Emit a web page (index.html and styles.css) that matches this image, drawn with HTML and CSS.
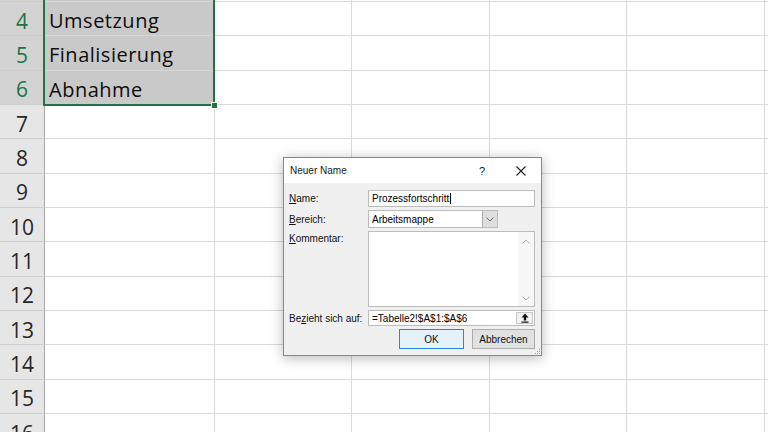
FILE: index.html
```html
<!DOCTYPE html>
<html lang="de">

<head>
    <meta charset="UTF-8">
    <meta name="viewport" content="width=device-width, initial-scale=1.0">
    <title>Neuer Name</title>
    <link rel="stylesheet" href="styles.css">
</head>

<body>
    <div class="sheet">
        <div class="row">
            <div class="hdr hdr-sel"></div>
            <div class="cell col-a sel"></div>
            <div class="cell col-b"></div><div class="cell col-c"></div><div class="cell col-b"></div><div class="cell col-c"></div><div class="cell col-f"></div>
        </div>
        <div class="row">
            <div class="hdr hdr-sel">4</div>
            <div class="cell col-a sel">Umsetzung</div>
            <div class="cell col-b"></div><div class="cell col-c"></div><div class="cell col-b"></div><div class="cell col-c"></div><div class="cell col-f"></div>
        </div>
        <div class="row">
            <div class="hdr hdr-sel">5</div>
            <div class="cell col-a sel">Finalisierung</div>
            <div class="cell col-b"></div><div class="cell col-c"></div><div class="cell col-b"></div><div class="cell col-c"></div><div class="cell col-f"></div>
        </div>
        <div class="row">
            <div class="hdr hdr-sel">6</div>
            <div class="cell col-a sel">Abnahme</div>
            <div class="cell col-b"></div><div class="cell col-c"></div><div class="cell col-b"></div><div class="cell col-c"></div><div class="cell col-f"></div>
        </div>
        <div class="row">
            <div class="hdr">7</div>
            <div class="cell col-a"></div>
            <div class="cell col-b"></div><div class="cell col-c"></div><div class="cell col-b"></div><div class="cell col-c"></div><div class="cell col-f"></div>
        </div>
        <div class="row">
            <div class="hdr">8</div>
            <div class="cell col-a"></div>
            <div class="cell col-b"></div><div class="cell col-c"></div><div class="cell col-b"></div><div class="cell col-c"></div><div class="cell col-f"></div>
        </div>
        <div class="row">
            <div class="hdr">9</div>
            <div class="cell col-a"></div>
            <div class="cell col-b"></div><div class="cell col-c"></div><div class="cell col-b"></div><div class="cell col-c"></div><div class="cell col-f"></div>
        </div>
        <div class="row">
            <div class="hdr">10</div>
            <div class="cell col-a"></div>
            <div class="cell col-b"></div><div class="cell col-c"></div><div class="cell col-b"></div><div class="cell col-c"></div><div class="cell col-f"></div>
        </div>
        <div class="row">
            <div class="hdr">11</div>
            <div class="cell col-a"></div>
            <div class="cell col-b"></div><div class="cell col-c"></div><div class="cell col-b"></div><div class="cell col-c"></div><div class="cell col-f"></div>
        </div>
        <div class="row">
            <div class="hdr">12</div>
            <div class="cell col-a"></div>
            <div class="cell col-b"></div><div class="cell col-c"></div><div class="cell col-b"></div><div class="cell col-c"></div><div class="cell col-f"></div>
        </div>
        <div class="row">
            <div class="hdr">13</div>
            <div class="cell col-a"></div>
            <div class="cell col-b"></div><div class="cell col-c"></div><div class="cell col-b"></div><div class="cell col-c"></div><div class="cell col-f"></div>
        </div>
        <div class="row">
            <div class="hdr">14</div>
            <div class="cell col-a"></div>
            <div class="cell col-b"></div><div class="cell col-c"></div><div class="cell col-b"></div><div class="cell col-c"></div><div class="cell col-f"></div>
        </div>
        <div class="row">
            <div class="hdr">15</div>
            <div class="cell col-a"></div>
            <div class="cell col-b"></div><div class="cell col-c"></div><div class="cell col-b"></div><div class="cell col-c"></div><div class="cell col-f"></div>
        </div>
        <div class="row">
            <div class="hdr">16</div>
            <div class="cell col-a"></div>
            <div class="cell col-b"></div><div class="cell col-c"></div><div class="cell col-b"></div><div class="cell col-c"></div><div class="cell col-f"></div>
        </div>
    </div>

    <!-- selection frame over A1:A6 -->
    <div class="selection">
        <span class="fill-handle"></span>
    </div>

    <div class="dlg">
        <div class="dlg-title">
            <span class="dlg-caption">Neuer Name</span>
            <span class="dlg-help">?</span>
            <span class="dlg-close">
                <svg width="10" height="10" viewBox="0 0 10 10"><path d="M0.5 0.5L9.5 9.5M9.5 0.5L0.5 9.5" stroke="#222" stroke-width="1.1" fill="none"/></svg>
            </span>
        </div>
        <div class="dlg-body">
            <div class="form">
                <label class="lbl"><u>N</u>ame:</label>
                <div class="field">Prozessfortschritt<span class="caret"></span></div>

                <label class="lbl"><u>B</u>ereich:</label>
                <div class="combo">
                    <span class="combo-text">Arbeitsmappe</span>
                    <span class="combo-btn">
                        <svg width="8" height="5" viewBox="0 0 8 5"><path d="M0.5 0.5L4 4L7.5 0.5" stroke="#6d6d6d" stroke-width="1" fill="none"/></svg>
                    </span>
                </div>

                <label class="lbl lbl-top"><u>K</u>ommentar:</label>
                <div class="memo">
                    <div class="memo-text"></div>
                    <div class="scroll">
                        <svg width="8" height="5" viewBox="0 0 8 5"><path d="M0.5 4.5L4 1L7.5 4.5" stroke="#b0b0b0" stroke-width="1" fill="none"/></svg>
                        <svg width="8" height="5" viewBox="0 0 8 5"><path d="M0.5 0.5L4 4L7.5 0.5" stroke="#b0b0b0" stroke-width="1" fill="none"/></svg>
                    </div>
                </div>

                <label class="lbl">Be<u>z</u>ieht sich auf:</label>
                <div class="field ref">
                    <span class="ref-text">=Tabelle2!$A$1:$A$6</span>
                    <span class="ref-btn">
                        <svg width="8" height="10" viewBox="0 0 8 10"><path d="M4 0.5L7.5 4.5H5.2V7.5H2.8V4.5H0.5Z" fill="#111"/><rect x="0.5" y="8.5" width="7" height="1.2" fill="#111"/></svg>
                    </span>
                </div>
            </div>
            <div class="buttons">
                <button class="btn btn-default">OK</button>
                <button class="btn">Abbrechen</button>
            </div>
        </div>
        <svg class="grip" width="7" height="7" viewBox="0 0 7 7">
            <rect x="5" y="1" width="1" height="1" fill="#a0a0a0"/>
            <rect x="3" y="3" width="1" height="1" fill="#a0a0a0"/>
            <rect x="5" y="3" width="1" height="1" fill="#a0a0a0"/>
            <rect x="1" y="5" width="1" height="1" fill="#a0a0a0"/>
            <rect x="3" y="5" width="1" height="1" fill="#a0a0a0"/>
            <rect x="5" y="5" width="1" height="1" fill="#a0a0a0"/>
        </svg>
    </div>
</body>

</html>
```

FILE: styles.css
```css
* {
    box-sizing: border-box;
}

body {
    margin: 0;
    width: 768px;
    height: 432px;
    overflow: hidden;
    position: relative;
    background: #fff;
    font-family: "Open Sans", sans-serif;
}

/* spreadsheet grid */
.sheet {
    margin-top: -32.33px;
}

.row {
    display: flex;
    height: 34.33px;
}

.hdr {
    width: 45px;
    flex: none;
    display: flex;
    align-items: center;
    justify-content: center;
    padding-top: 4px;
    background: #e6e6e6;
    border-right: 1px solid #a8a8a8;
    border-bottom: 1px solid #cdcdcd;
    font-size: 21px;
    color: #262626;
}

.hdr-sel {
    background: #d3d3d3;
    color: #217346;
}

.cell {
    flex: none;
    display: flex;
    align-items: center;
    padding: 4px 0 0 4px;
    border-right: 1px solid #dadada;
    border-bottom: 1px solid #dadada;
    font-size: 20px;
    letter-spacing: 0.5px;
    color: #0d0d0d;
    white-space: nowrap;
}

.col-a { width: 170px; }
.col-b { width: 137px; }
.col-c { width: 138px; }
.col-f { flex: 1; }

.cell.sel {
    background: #c9c9c9;
    border-bottom-color: #d6d6d6;
}

.selection {
    position: absolute;
    left: 43px;
    top: -40px;
    width: 172px;
    height: 146px;
    border: 2px solid #217346;
}

.fill-handle {
    position: absolute;
    right: -5px;
    bottom: -5px;
    width: 7px;
    height: 7px;
    background: #217346;
    border: 1px solid #fff;
}

/* dialog */
.dlg {
    position: absolute;
    left: 283px;
    top: 157px;
    width: 259px;
    height: 199px;
    background: #f0f0f0;
    border: 1px solid #4c95de;
    box-shadow: 0 2px 12px rgba(0, 0, 0, 0.28);
    font-family: "Liberation Sans", Arial, sans-serif;
    font-size: 10px;
    color: #000;
}

.dlg-title {
    display: flex;
    align-items: center;
    height: 25px;
    padding-left: 6px;
    background: #fff;
}

.dlg-caption {
    flex: 1;
    font-size: 10px;
    color: #1a1a1a;
}

.dlg-help {
    width: 20px;
    margin-right: 9px;
    text-align: center;
    font-size: 11px;
    color: #222;
}

.dlg-close {
    width: 40px;
    display: flex;
    justify-content: center;
}

.dlg-body {
    padding: 7px 6px 0 5px;
}

.form {
    display: grid;
    grid-template-columns: 79px 167px;
    grid-template-rows: 17px 18px 76px 16px;
    row-gap: 3px;
}

.lbl {
    display: flex;
    align-items: center;
    color: #111;
}

.lbl-top {
    align-items: flex-start;
    padding-top: 2px;
}

.field {
    display: flex;
    align-items: center;
    padding-left: 3px;
    background: #fff;
    border: 1px solid #bcbcbc;
    white-space: nowrap;
}

.caret {
    display: inline-block;
    width: 1px;
    height: 11px;
    margin-left: 1px;
    background: #000;
}

.combo {
    display: flex;
    width: 130px;
    background: #fff;
    border: 1px solid #bcbcbc;
}

.combo-text {
    flex: 1;
    display: flex;
    align-items: center;
    padding-left: 3px;
}

.combo-btn {
    width: 15px;
    display: flex;
    align-items: center;
    justify-content: center;
    background: #dedede;
    border-left: 1px solid #acacac;
}

.memo {
    display: flex;
    background: #fff;
    border: 1px solid #bcbcbc;
}

.memo-text {
    flex: 1;
}

.scroll {
    width: 16px;
    display: flex;
    flex-direction: column;
    justify-content: space-between;
    align-items: center;
    padding: 7px 0 5px;
    background: #f7f7f7;
}

.ref {
    padding-right: 1px;
}

.ref-text {
    flex: 1;
}

.ref-btn {
    width: 17px;
    height: 12px;
    display: flex;
    align-items: center;
    justify-content: center;
    background: #f2f2f2;
    border: 1px solid #c6c6c6;
}

.buttons {
    display: flex;
    justify-content: flex-end;
    gap: 8px;
    margin-top: 3px;
}

.btn {
    height: 20px;
    width: 63px;
    padding: 0;
    font-family: "Liberation Sans", Arial, sans-serif;
    font-size: 10px;
    color: #111;
    background: #e1e1e1;
    border: 1px solid #adadad;
}

.btn-default {
    width: 65px;
    background: #e5f1fb;
    border: 1px solid #2a86d6;
}

.grip {
    position: absolute;
    right: 0;
    bottom: 0;
}
```
